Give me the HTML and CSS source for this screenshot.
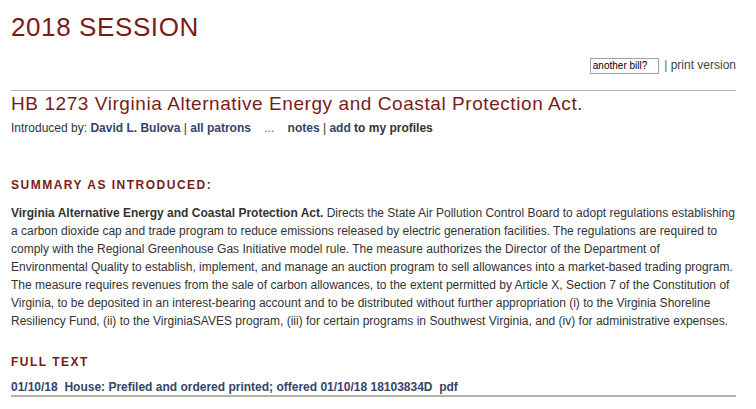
FILE: index.html
```html
<!DOCTYPE html>
<html lang="en">
<head>
    <meta charset="UTF-8">
    <title>HB 1273 - 2018 Session</title>
    <link rel="stylesheet" href="styles.css">
</head>
<body>
    <div class="page">
        <h1 class="session-title">2018 SESSION</h1>

        <div class="tools">
            <input class="bill-search" type="text" value="another bill?">
            <span class="sep">|</span> <a href="#" class="print-link">print version</a>
        </div>

        <div class="bill">
            <h2 class="bill-title">HB 1273 Virginia Alternative Energy and Coastal Protection Act.</h2>
            <div class="patrons">
                Introduced by: <a href="#">David L. Bulova</a> | <a href="#">all patrons</a>
                <span class="dots">...</span>
                <a href="#">notes</a> | <a href="#">add</a> <b>to my profiles</b>
            </div>
        </div>

        <h4 class="section-head summary-head">SUMMARY AS INTRODUCED:</h4>
        <p class="summary"><b>Virginia Alternative Energy and Coastal Protection Act.</b> Directs the State Air Pollution Control Board to adopt regulations establishing a carbon dioxide cap and trade program to reduce emissions released by electric generation facilities. The regulations are required to comply with the Regional Greenhouse Gas Initiative model rule. The measure authorizes the Director of the Department of Environmental Quality to establish, implement, and manage an auction program to sell allowances into a market-based trading program. The measure requires revenues from the sale of carbon allowances, to the extent permitted by Article X, Section 7 of the Constitution of Virginia, to be deposited in an interest-bearing account and to be distributed without further appropriation (i) to the Virginia Shoreline Resiliency Fund, (ii) to the VirginiaSAVES program, (iii) for certain programs in Southwest Virginia, and (iv) for administrative expenses.</p>

        <h4 class="section-head">FULL TEXT</h4>
        <ul class="text-list">
            <li><a href="#">01/10/18&nbsp; House: Prefiled and ordered printed; offered 01/10/18 18103834D</a>&nbsp; <a href="#">pdf</a></li>
        </ul>
    </div>
</body>
</html>
```

FILE: styles.css
```css
body {
    margin: 0;
    font-family: "Liberation Sans", Arial, sans-serif;
    font-size: 12px;
    color: #333;
    background-color: #fff;
}
.page {
    padding: 0 20px 0 11px;
}
a {
    color: #33456b;
    font-weight: bold;
    text-decoration: none;
}
.session-title {
    margin: 0;
    padding-top: 12px;
    font-size: 26px;
    font-weight: normal;
    letter-spacing: 0.6px;
    line-height: 30px;
    color: #7a1b1b;
}
.tools {
    margin-top: 15px;
    text-align: right;
    font-size: 12px;
    line-height: 17px;
}
.bill-search {
    width: 63px;
    height: 12px;
    padding: 1px 2px;
    border: 1px solid #a0a0a0;
    font-family: "Liberation Sans", Arial, sans-serif;
    font-size: 10px;
    color: #000;
    vertical-align: middle;
}
.sep {
    margin-left: 2px;
    color: #666;
}
.print-link {
    font-weight: normal;
    color: #444;
}
.bill {
    margin-top: 16px;
    border-top: 1px solid #b7b3a4;
}
.bill-title {
    margin: 0;
    padding-top: 2px;
    font-size: 19px;
    font-weight: normal;
    letter-spacing: 0.57px;
    line-height: 22px;
    color: #7a1b1b;
}
.patrons {
    margin-top: 5px;
    line-height: 16px;
}
.patrons b {
    color: #333;
}
.dots {
    margin: 0 10px;
    color: #666;
}
.section-head {
    margin: 0;
    font-size: 12px;
    font-weight: bold;
    letter-spacing: 1.5px;
    color: #7a1b1b;
}
.summary-head {
    margin-top: 42px;
}
.summary {
    margin: 12px 0 25px;
    line-height: 18px;
}
.summary b {
    color: #333;
}
.text-list {
    list-style: none;
    margin: 10px 0 0;
    padding: 0;
    border-bottom: 2px solid #b7b3a4;
}
.text-list li {
    line-height: 16px;
}
```
